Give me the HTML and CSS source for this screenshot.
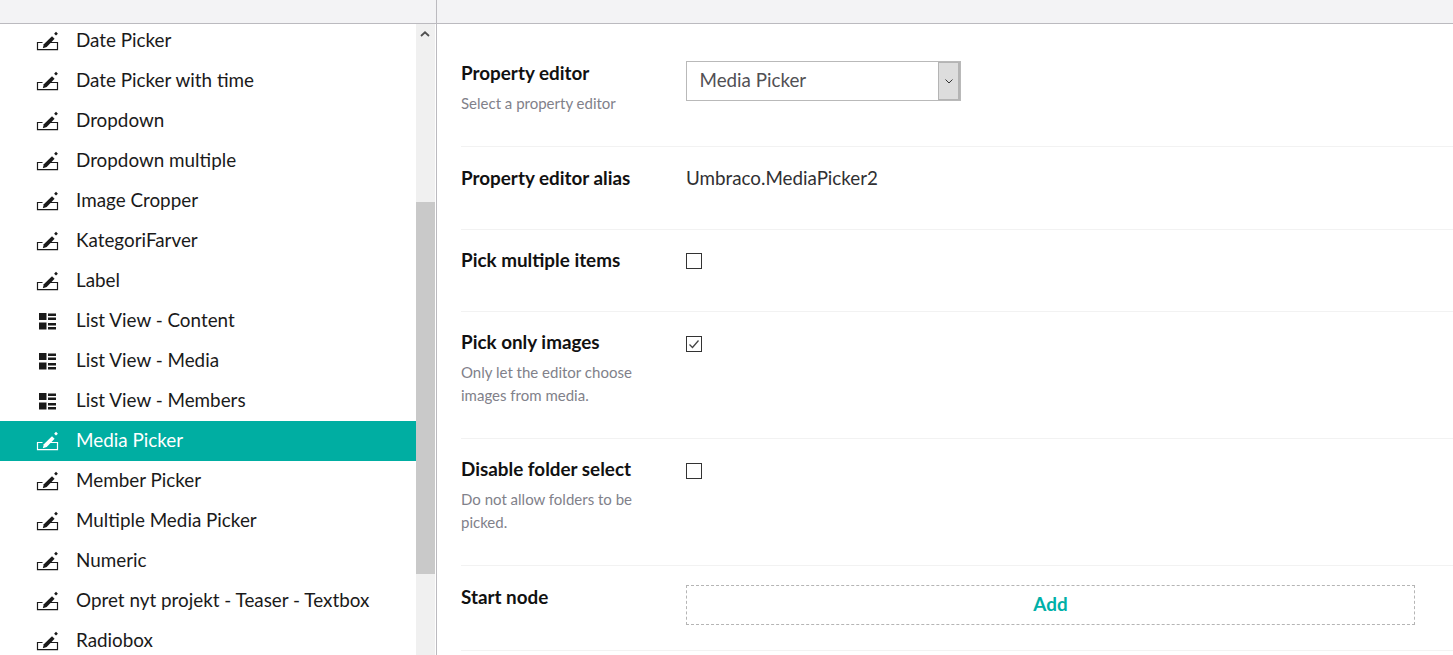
FILE: index.html
```html
<!DOCTYPE html>
<html lang="en">
<head>
<meta charset="utf-8">
<title>Data type</title>
<link rel="stylesheet" href="styles.css">
</head>
<body>
<svg class="defs" width="0" height="0" aria-hidden="true">
  <symbol id="pen" viewBox="0 0 22 20">
    <path d="M6 11.500H1V18.700H21V11.500H13.500" fill="none" stroke="currentColor" stroke-width="1.200"/>
    <path d="M6.300 17.300L7.300 13.300L15.500 5.200L18.100 7.800L10.200 16Z" fill="currentColor"/>
    <path d="M17.600 2.700L19.500 0.800L21.400 2.700L19.500 4.600Z" fill="currentColor"/>
  </symbol>
  <symbol id="list" viewBox="0 0 17 17">
    <path d="M0 0H7.500V7H0ZM0 9.500H7.500V16.500H0ZM9 0.500H17V3H9ZM9 4.500H17V7H9ZM9 10H17V12.500H9ZM9 14H17V16.500H9Z" fill="currentColor"/>
  </symbol>
</svg>
<div class="app">
  <aside class="sidebar">
    <div class="bar"></div>
    <div class="tree-wrap">
      <ul class="tree">
        <li class="item"><svg class="ico"><use href="#pen"/></svg>Date Picker</li>
        <li class="item"><svg class="ico"><use href="#pen"/></svg>Date Picker with time</li>
        <li class="item"><svg class="ico"><use href="#pen"/></svg>Dropdown</li>
        <li class="item"><svg class="ico"><use href="#pen"/></svg>Dropdown multiple</li>
        <li class="item"><svg class="ico"><use href="#pen"/></svg>Image Cropper</li>
        <li class="item"><svg class="ico"><use href="#pen"/></svg>KategoriFarver</li>
        <li class="item"><svg class="ico"><use href="#pen"/></svg>Label</li>
        <li class="item"><svg class="ico ico-list"><use href="#list"/></svg>List View - Content</li>
        <li class="item"><svg class="ico ico-list"><use href="#list"/></svg>List View - Media</li>
        <li class="item"><svg class="ico ico-list"><use href="#list"/></svg>List View - Members</li>
        <li class="item active"><svg class="ico"><use href="#pen"/></svg>Media Picker</li>
        <li class="item"><svg class="ico"><use href="#pen"/></svg>Member Picker</li>
        <li class="item"><svg class="ico"><use href="#pen"/></svg>Multiple Media Picker</li>
        <li class="item"><svg class="ico"><use href="#pen"/></svg>Numeric</li>
        <li class="item"><svg class="ico"><use href="#pen"/></svg>Opret nyt projekt - Teaser - Textbox</li>
        <li class="item"><svg class="ico"><use href="#pen"/></svg>Radiobox</li>
      </ul>
      <div class="scrollbar">
        <svg class="arrow" viewBox="0 0 10 6"><path d="M1 5L5 1.300L9 5" fill="none" stroke="#505050" stroke-width="1.800"/></svg>
        <div class="thumb"></div>
      </div>
    </div>
  </aside>
  <main class="main">
    <div class="bar"></div>
    <section class="form">
      <div class="row row-editor">
        <div class="label"><h3>Property editor</h3><p>Select a property editor</p></div>
        <div class="select">
          <span class="select-text">Media Picker</span>
          <span class="select-btn"><svg viewBox="0 0 8 5" class="caret"><path d="M0.500 0.500L4 4L7.500 0.500" fill="none" stroke="#333" stroke-width="1"/></svg></span>
        </div>
      </div>
      <div class="row row-alias">
        <div class="label"><h3>Property editor alias</h3></div>
        <div class="value">Umbraco.MediaPicker2</div>
      </div>
      <div class="row row-multi">
        <div class="label"><h3>Pick multiple items</h3></div>
        <span class="check"></span>
      </div>
      <div class="row row-images">
        <div class="label"><h3>Pick only images</h3><p>Only let the editor choose images from media.</p></div>
        <span class="check"><svg viewBox="0 0 14 14" class="tick"><path d="M2.500 7.500L5.500 10.500L11.500 3.500" fill="none" stroke="#444" stroke-width="1.300"/></svg></span>
      </div>
      <div class="row row-folder">
        <div class="label"><h3>Disable folder select</h3><p>Do not allow folders to be picked.</p></div>
        <span class="check"></span>
      </div>
      <div class="row row-start">
        <div class="label"><h3>Start node</h3></div>
        <div class="add">Add</div>
      </div>
    </section>
  </main>
</div>
</body>
</html>
```
FILE: styles.css
```css
* { box-sizing: border-box; }
html, body { margin: 0; height: 100%; overflow: hidden; background: #fff; }
body { font-family: Lato, "Open Sans", sans-serif; color: #1b1b1b; }
.defs { position: absolute; }
.app { display: flex; height: 655px; }
.bar { height: 24px; flex: none; background: #f3f3f5; border-bottom: 1px solid #bbbabf; }
.sidebar { width: 437px; flex: none; display: flex; flex-direction: column; border-right: 1px solid #bbbabf; }
.tree-wrap { flex: 1; display: flex; overflow: hidden; min-height: 0; }
.tree { list-style: none; margin: -3px 0 0; padding: 0; width: 416px; flex: none; }
.item { height: 40px; display: flex; align-items: center; font-size: 18.850px; line-height: 38px; padding-bottom: 2px; color: #1a1a1a; padding-left: 36px; white-space: nowrap; }
.ico { width: 23px; height: 20px; margin-right: 17px; flex: none; color: #1a1a1a; position: relative; top: 1px; }
.ico-list { width: 17px; height: 17px; margin-left: 3px; margin-right: 20px; top: 1px; }
.active { background: #00aea2; color: #fff; }
.active .ico { color: #fff; }
.scrollbar { width: 19px; flex: none; background: #f0f0f0; position: relative; }
.arrow { position: absolute; left: 4px; top: 7px; width: 10px; height: 6px; display: block; }
.thumb { position: absolute; left: 0; right: 0; top: 178px; height: 372px; background: #c9c9c9; }
.main { flex: 1; min-width: 0; display: flex; flex-direction: column; }
.form { padding-left: 24px; }
.row { display: flex; align-items: flex-start; border-bottom: 1px solid #f2f2f2; }
.label { width: 225px; flex: none; }
.label h3 { margin: 0; font-size: 18.850px; line-height: 22px; font-weight: 700; color: #111; }
.label p { margin: 8px 0 0; font-size: 15px; line-height: 23px; color: #81818a; width: 185px; }
.row-editor { height: 123px; padding-top: 38px; }
.row-alias { height: 83px; padding-top: 20px; }
.row-multi { height: 82px; padding-top: 19px; }
.row-images { height: 127px; padding-top: 19px; }
.row-folder { height: 127px; padding-top: 19px; }
.row-start { height: 85px; padding-top: 20px; }
.select { width: 275px; height: 40px; border: 1px solid #b9b9b9; display: flex; margin-top: -1px; }
.select-text { flex: 1; font-size: 18.800px; line-height: 36px; color: #515054; padding-left: 12.500px; }
.select-btn { width: 22px; background: #dddddd; border: 1px solid #b4b4b4; border-width: 1px 2px 1px 1px; display: flex; align-items: center; justify-content: center; }
.caret { width: 8px; height: 5px; display: block; }
.value { font-size: 18.800px; line-height: 22px; color: #303033; }
.check { width: 16px; height: 16px; border: 1px solid #333; display: block; background: #fff; margin-top: 4px; }
.row-images .check, .row-folder .check { margin-top: 5px; }
.tick { width: 14px; height: 14px; display: block; }
.add { width: 729px; height: 40px; border: 1px dashed #b5b5b5; margin-top: -1px; text-align: center; font-size: 18.850px; line-height: 36px; font-weight: 700; color: #00b0a8; }
```
